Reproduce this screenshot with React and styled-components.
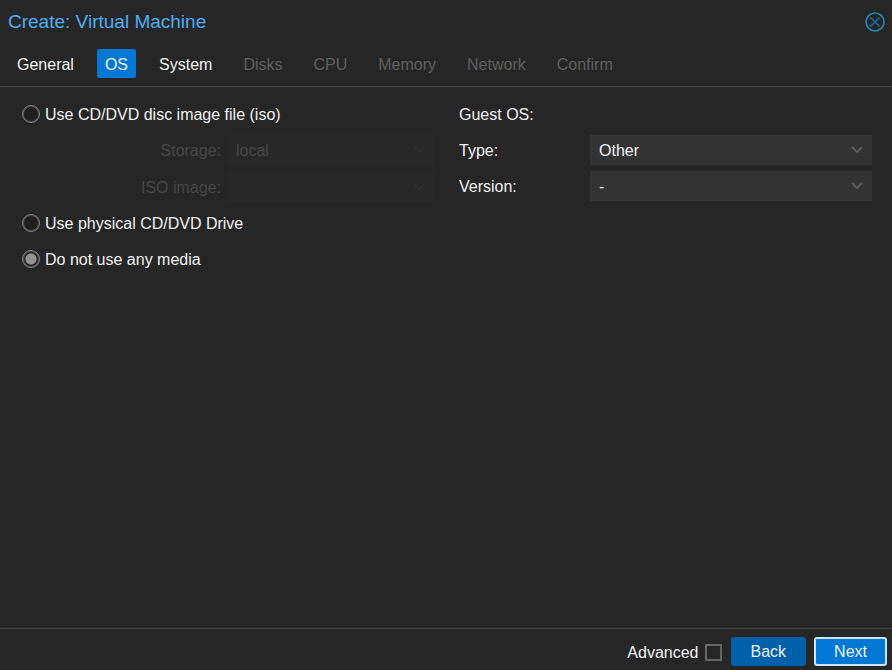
import { useState } from "react";
import styled, { createGlobalStyle } from "styled-components";

const GlobalStyle = createGlobalStyle`
  *, *::before, *::after {
    box-sizing: border-box;
  }

  body {
    margin: 0;
    background: #262626;
  }

  button, input, select {
    font: inherit;
  }
`;

const Window = styled.main`
  display: flex;
  flex-direction: column;
  min-height: 100vh;
  background: #262626;
  color: #f2f2f2;
  font-family: "Liberation Sans", Arial, sans-serif;
  font-size: 16px;
  line-height: 21px;
`;

const TitleBar = styled.header`
  display: flex;
  align-items: center;
  justify-content: space-between;
  height: 43px;
  padding: 0 7px 0 8px;
`;

const Title = styled.h1`
  margin: 0;
  color: #4dadf1;
  font-size: 19px;
  font-weight: 400;
`;

const CloseButton = styled.button`
  display: flex;
  padding: 0;
  border: 0;
  background: none;
  color: #1f88b8;
  cursor: pointer;
`;

const TabBar = styled.nav`
  display: flex;
  gap: 15px;
  padding: 6px 9px 8px;
  border-bottom: 1px solid #464646;
`;

const Tab = styled.button`
  height: 29px;
  padding: 2px 8px 0;
  border: 0;
  border-radius: 2px;
  background: ${props => (props.$active ? "#0078d4" : "transparent")};
  color: #f2f2f2;
  cursor: pointer;

  &:disabled {
    color: #5f5f5f;
    cursor: default;
  }
`;

const Panel = styled.section`
  display: grid;
  grid-template-columns: 412fr 413fr;
  align-items: start;
  gap: 25px;
  flex: 1;
  padding: 12px 20px 12px 22px;
`;

const Column = styled.div`
  display: flex;
  flex-direction: column;
  gap: 6px;
`;

const RadioLabel = styled.label`
  display: flex;
  align-items: center;
  gap: 5px;
  height: 30px;
`;

const Radio = styled.input`
  appearance: none;
  width: 18px;
  height: 18px;
  margin: 0;
  border: 1px solid #868686;
  border-radius: 50%;
  background: #1f1f1f;
  box-shadow: inset 0 0 0 1px #4c4c4c;

  &:checked {
    background: radial-gradient(circle, #919191 5px, #262626 6px);
  }
`;

const MediaFields = styled.fieldset`
  display: flex;
  flex-direction: column;
  gap: 7px;
  min-width: 0;
  margin: 0;
  padding: 0;
  border: 0;
`;

const FieldRow = styled.div`
  display: grid;
  grid-template-columns: ${props => (props.$nested ? "199px" : "131px")} 1fr;
  align-items: center;
  height: 30px;
`;

const FieldLabel = styled.label`
  color: ${props => (props.$nested ? "#464646" : "inherit")};
  text-align: ${props => (props.$nested ? "right" : "left")};
`;

const SelectBox = styled.div`
  display: grid;
  align-items: center;
  margin-left: ${props => (props.$nested ? "7px" : "0")};
  background: ${props => (props.$nested ? "#282828" : "#333333")};
  color: ${props => (props.$nested ? "#2e2e2e" : "#595959")};

  svg {
    grid-area: 1 / 1;
    justify-self: end;
    margin-right: 9px;
    pointer-events: none;
  }
`;

const Select = styled.select`
  grid-area: 1 / 1;
  appearance: none;
  width: 100%;
  height: 30px;
  padding: 0 28px 0 ${props => (props.$nested ? "8px" : "9px")};
  border: 0;
  border-radius: 0;
  background: transparent;
  color: #f2f2f2;

  &:disabled {
    color: #464646;
    opacity: 1;
  }

  option {
    background: #333333;
  }
`;

const Footer = styled.footer`
  display: flex;
  align-items: center;
  justify-content: flex-end;
  gap: 8px;
  padding: 8px 5px 4px;
  border-top: 1px solid #464646;
`;

const CheckLabel = styled.label`
  display: flex;
  align-items: center;
  gap: 6px;
  padding-top: 2px;
  margin-right: 1px;
`;

const Checkbox = styled.input`
  appearance: none;
  width: 17px;
  height: 17px;
  margin: 0;
  border: 2px solid #666666;
  background: #262626;

  &:checked {
    background: #919191;
  }
`;

const Button = styled.button`
  height: 29px;
  padding: 0 ${props => (props.$primary ? "18px" : "20px")};
  border: ${props => (props.$primary ? "2px solid #c9e5fa" : "0")};
  border-radius: 3px;
  background: ${props => (props.$primary ? "#0078d4" : "#0060a9")};
  color: #f2f2f2;
  cursor: pointer;
`;

const tabs = [
  { name: "General" },
  { name: "OS" },
  { name: "System" },
  { name: "Disks", disabled: true },
  { name: "CPU", disabled: true },
  { name: "Memory", disabled: true },
  { name: "Network", disabled: true },
  { name: "Confirm", disabled: true },
];

function CloseIcon() {
  return (
    <svg width="20" height="20" viewBox="0 0 20 20" fill="none" stroke="currentColor" aria-hidden="true">
      <circle cx="10" cy="10" r="9" strokeWidth="1.7" />
      <path d="M5.5 5.5l9 9M14.5 5.5l-9 9" stroke="#166d9b" strokeWidth="1.7" />
    </svg>
  );
}

function Chevron() {
  return (
    <svg width="12" height="8" viewBox="0 0 12 8" fill="none" stroke="currentColor" strokeWidth="2" aria-hidden="true">
      <path d="M1 1l5 5 5-5" />
    </svg>
  );
}

function SelectField({ id, label, options, nested }) {
  return (
    <FieldRow $nested={nested}>
      <FieldLabel htmlFor={id} $nested={nested}>{label}</FieldLabel>
      <SelectBox $nested={nested}>
        <Select id={id} $nested={nested}>
          {options.map(option => (
            <option key={option}>{option}</option>
          ))}
        </Select>
        <Chevron />
      </SelectBox>
    </FieldRow>
  );
}

function MediaOption({ value, media, onChange, children }) {
  return (
    <RadioLabel>
      <Radio type="radio" name="media" value={value} checked={media === value} onChange={() => onChange(value)} />
      {children}
    </RadioLabel>
  );
}

export default function App() {
  const [active, setActive] = useState("OS");
  const [media, setMedia] = useState("none");

  return (
    <Window>
      <GlobalStyle />
      <TitleBar>
        <Title>Create: Virtual Machine</Title>
        <CloseButton type="button" aria-label="Close">
          <CloseIcon />
        </CloseButton>
      </TitleBar>

      <TabBar>
        {tabs.map(({ name, disabled }) => (
          <Tab key={name} type="button" $active={name === active} disabled={disabled} onClick={() => setActive(name)}>
            {name}
          </Tab>
        ))}
      </TabBar>

      <Panel>
        <Column>
          <MediaOption value="iso" media={media} onChange={setMedia}>Use CD/DVD disc image file (iso)</MediaOption>
          <MediaFields disabled={media !== "iso"}>
            <SelectField id="storage" label="Storage:" options={["local"]} nested />
            <SelectField id="iso-image" label="ISO image:" options={[]} nested />
          </MediaFields>
          <MediaOption value="cdrom" media={media} onChange={setMedia}>Use physical CD/DVD Drive</MediaOption>
          <MediaOption value="none" media={media} onChange={setMedia}>Do not use any media</MediaOption>
        </Column>

        <Column>
          <FieldRow>Guest OS:</FieldRow>
          <SelectField id="os-type" label="Type:" options={["Other"]} />
          <SelectField id="os-version" label="Version:" options={["-"]} />
        </Column>
      </Panel>

      <Footer>
        <CheckLabel>
          Advanced
          <Checkbox type="checkbox" />
        </CheckLabel>
        <Button type="button">Back</Button>
        <Button type="button" $primary>Next</Button>
      </Footer>
    </Window>
  );
}
